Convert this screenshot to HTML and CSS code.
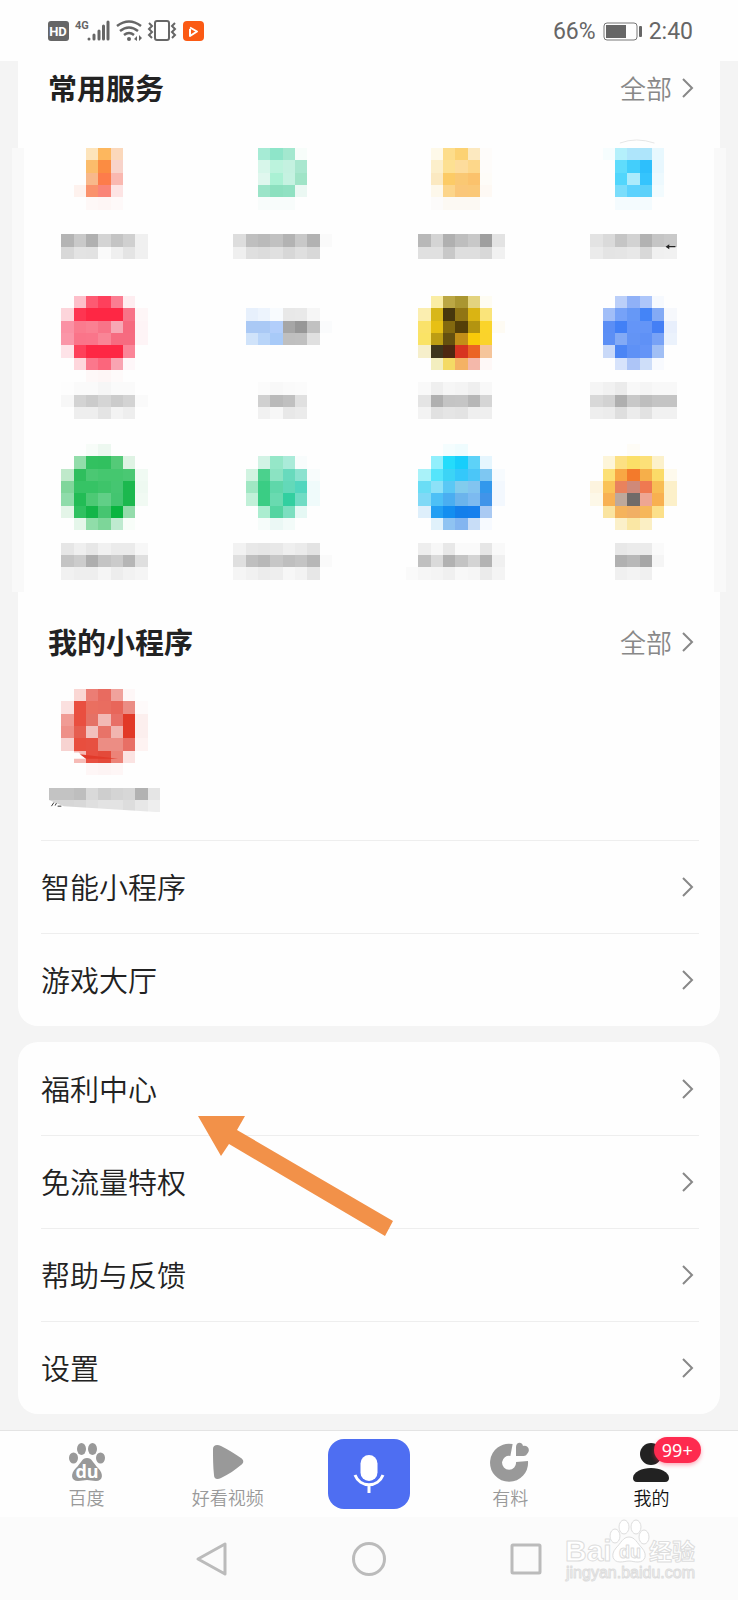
FILE: index.html
```html
<!DOCTYPE html>
<html lang="zh-CN">
  <head>
    <meta charset="UTF-8" />
    <meta name="viewport" content="width=device-width, initial-scale=1.0" />
    <title>我的</title>
    <link rel="stylesheet" href="styles.css" />
  </head>

  <body>
    <header class="status">
      <div class="status-left">
        <svg width="156" height="24" viewBox="0 0 156 24" fill="none" stroke="#666" stroke-width="2">
          <rect x="0" y="2" width="21" height="20" rx="3" fill="#666" stroke="none" />
          <text x="10" y="17" class="hd">HD</text>
          <text x="27" y="10" class="net">4G</text>
          <g stroke-width="3" stroke-linecap="round">
            <path d="M41 20v0M46 20v-4M51 20v-8M55.500 20V7M60 20V3" />
          </g>
          <path d="M69 7q12-9 24 0M72 12q9-7 18 0M76 16q5-4 10 0" stroke-width="2.500" />
          <circle cx="81" cy="20" r="2" fill="#666" stroke="none" />
          <path d="M86 20l3-3v5zM94 19l-3-3v6z" fill="#666" stroke="none" />
          <rect x="107" y="2" width="14" height="19" rx="2" />
          <path d="M101 4l3 3-3 3 3 3-3 3 3 3M127 4l-3 3 3 3-3 3 3 3-3 3" />
          <rect x="135" y="2" width="21" height="20" rx="4" fill="#fb5a14" stroke="none" />
          <path d="M142 10v7l7-4.500-7-4" stroke="#fff" stroke-linejoin="round" />
        </svg>
      </div>
      <div class="status-right">
        <span>66%</span>
        <svg width="39" height="19" viewBox="0 0 39 19" fill="none">
          <rect x="1" y="1" width="33" height="17" rx="3" stroke="#777" stroke-width="1" />
          <rect x="3" y="3" width="20" height="13" fill="#666" />
          <rect x="36" y="4" width="3" height="11" rx="1" fill="#666" />
        </svg>
        <span>2:40</span>
      </div>
    </header>

    <main class="content">
      <section class="card card-top">
        <div class="head">
          <h2>常用服务</h2>
          <a class="more" href="#"><span>全部</span><svg class="chevron" viewBox="0 0 12 20"><path d="M1 1l9 9-9 9" /></svg></a>
        </div>
        <div class="services" id="services"></div>

        <div class="head">
          <h2>我的小程序</h2>
          <a class="more" href="#"><span>全部</span><svg class="chevron" viewBox="0 0 12 20"><path d="M1 1l9 9-9 9" /></svg></a>
        </div>
        <div class="programs" id="programs"></div>

        <nav class="list">
          <a href="#"><span>智能小程序</span><svg class="chevron" viewBox="0 0 12 20"><path d="M1 1l9 9-9 9" /></svg></a>
          <a href="#"><span>游戏大厅</span><svg class="chevron" viewBox="0 0 12 20"><path d="M1 1l9 9-9 9" /></svg></a>
        </nav>
      </section>

      <section class="card">
        <nav class="list">
          <a href="#"><span>福利中心</span><svg class="chevron" viewBox="0 0 12 20"><path d="M1 1l9 9-9 9" /></svg></a>
          <a href="#"><span>免流量特权</span><svg class="chevron" viewBox="0 0 12 20"><path d="M1 1l9 9-9 9" /></svg></a>
          <a href="#"><span>帮助与反馈</span><svg class="chevron" viewBox="0 0 12 20"><path d="M1 1l9 9-9 9" /></svg></a>
          <a href="#"><span>设置</span><svg class="chevron" viewBox="0 0 12 20"><path d="M1 1l9 9-9 9" /></svg></a>
        </nav>
        <svg class="pointer" width="195" height="120" viewBox="0 0 195 120">
          <path d="M0 0h47l-8 14 156 91-8 15L31 28l-8 12z" fill="#f29149" />
        </svg>
      </section>
    </main>

    <footer>
      <nav class="tabs">
        <a href="#">
          <svg width="40" height="40" viewBox="0 0 40 40" fill="#999">
            <ellipse cx="14.500" cy="7" rx="4.500" ry="6" />
            <ellipse cx="25.500" cy="7" rx="4.500" ry="6" />
            <ellipse cx="6.500" cy="16" rx="4.500" ry="5.500" />
            <ellipse cx="33.500" cy="16" rx="4.500" ry="5.500" />
            <path d="M20 16c5 0 6 5 11 10 6 6 5 13-2 13-4 0-6-1-9-1s-5 1-9 1c-7 0-8-7-2-13 5-5 6-10 11-10z" />
            <text x="20" y="36" class="du">du</text>
          </svg>
          百度
        </a>
        <a href="#">
          <svg width="40" height="40" viewBox="0 0 40 40" fill="#999">
            <path d="M5 7c0-4 4-5 8-3 8 4 14 8 20 12 3 2 3 5 0 7-6 5-12 9-20 13-4 2-7 1-7-3-1-9-1-17-1-26z" />
          </svg>
          好看视频
        </a>
        <button type="button" class="voice" aria-label="语音">
          <svg width="32" height="38" viewBox="0 0 32 38" fill="none" stroke="#fff" stroke-width="3">
            <rect x="7.500" y="0" width="17" height="26" rx="8.500" fill="#fff" stroke="none" />
            <path d="M2 20c5 13 23 13 28 0M16 30v8" />
          </svg>
        </button>
        <a href="#">
          <svg width="40" height="40" viewBox="0 0 40 40" fill="none">
            <path d="M21.500 8A13 13 0 1 0 32 19.500" stroke="#999" stroke-width="12" />
            <path d="M26 14V5c0-5 6-6 7-1 5-1 8 4 4 8-1 2-3 2-5 2z" fill="#999" />
          </svg>
          有料
        </a>
        <a href="#" class="active">
          <svg width="40" height="40" viewBox="0 0 40 40" fill="#222">
            <circle cx="20" cy="12" r="11" />
            <path d="M2 36c0-6 9-10 18-10s18 4 18 10c0 2-1 4-4 4H6c-3 0-4-2-4-4z" />
          </svg>
          我的
          <span class="badge">99+</span>
        </a>
      </nav>

      <div class="sysnav">
        <button type="button" aria-label="返回">
          <svg width="34" height="36" viewBox="0 0 34 36"><path d="M30 3v30L3 18z" /></svg>
        </button>
        <button type="button" aria-label="主屏幕">
          <svg width="34" height="36" viewBox="0 0 34 36"><circle cx="17" cy="18" r="15.500" /></svg>
        </button>
        <button type="button" aria-label="最近任务">
          <svg width="34" height="36" viewBox="0 0 34 36"><rect x="3" y="4" width="28" height="28" rx="1" /></svg>
        </button>
        <svg class="watermark" width="140" height="66" viewBox="0 0 140 66">
          <text x="3" y="43" class="wm-name">Bai</text>
          <g class="wm-paw">
            <ellipse cx="53" cy="18" rx="5" ry="7" />
            <ellipse cx="62" cy="9" rx="5" ry="7" />
            <ellipse cx="74" cy="9" rx="5" ry="7" />
            <ellipse cx="82" cy="19" rx="5" ry="7" />
            <path d="M67 19c6 0 8 6 13 11 6 7 3 14-4 14-4 0-6-1-9-1s-5 1-9 1c-7 0-10-7-4-14 5-5 7-11 13-11z" />
          </g>
          <text x="57" y="40" class="wm-du">du</text>
          <text x="87" y="42" class="wm-cn">经验</text>
          <text x="4" y="60" class="wm-url">jingyan.baidu.com</text>
        </svg>
      </div>
    </footer>

    <script src="script.js"></script>
  </body>
</html>
```
FILE: styles.css
```css
* {
  box-sizing: border-box;
}

body {
  margin: 0;
  min-height: 100vh;
  display: flex;
  flex-direction: column;
  background-color: #f4f4f4;
  color: #222;
  font-family: "Noto Sans CJK SC", sans-serif;
}

a {
  color: inherit;
  text-decoration: none;
}

button {
  padding: 0;
  border: none;
  background: none;
}

svg {
  display: block;
  flex: none;
}

/* Status bar */
.status {
  display: flex;
  justify-content: space-between;
  align-items: center;
  height: 61px;
  padding: 1px 45px 0 48px;
  background-color: #fefefe;
}

.status-right {
  display: flex;
  align-items: center;
  gap: 7px;
  color: #666;
  font-family: Roboto, sans-serif;
  font-size: 23px;
}

.hd {
  fill: #fff;
  stroke: none;
  font: bold 13px Roboto, sans-serif;
  text-anchor: middle;
}

.net {
  fill: #666;
  stroke: none;
  font: bold 11px Roboto, sans-serif;
}

/* Cards */
.content {
  flex: 1;
  display: flex;
  flex-direction: column;
  gap: 16px;
  padding: 0 18px 16px;
}

.card {
  position: relative;
  border-radius: 20px;
  background-color: #fefefe;
}

.card-top {
  border-radius: 0 0 20px 20px;
}

.head {
  display: flex;
  justify-content: space-between;
  align-items: center;
  height: 54px;
  padding: 0 26px 0 30px;
}

h2 {
  margin: 0;
  padding-bottom: 2px;
  font-size: 29px;
  font-weight: 700;
}

.more {
  display: flex;
  align-items: center;
  gap: 10px;
  color: #888;
  font-size: 26px;
  font-weight: 350;
}

.more span,
.list span {
  padding-bottom: 2px;
}

.chevron {
  width: 12px;
  height: 20px;
  fill: none;
  stroke: #888;
  stroke-width: 2;
}

.services {
  display: grid;
  grid-template-columns: 14fr 15fr 14fr 9fr;
  margin: 33px -6px 23px;
  padding: 0 25px;
  border: solid #f9f9f9;
  border-width: 0 12px;
}

.programs {
  padding: 20px 31px 3px;
}

.mosaic {
  width: 111px;
  height: 148px;
  overflow: visible;
}

.list {
  padding: 0 21px 0 23px;
}

.list a {
  display: flex;
  justify-content: space-between;
  align-items: center;
  height: 93px;
  padding-right: 5px;
  font-size: 29px;
  font-weight: 350;
}

.list a + a,
.programs + .list a {
  border-top: 1px solid #eee;
}

.pointer {
  position: absolute;
  left: 180px;
  top: 74px;
}

/* Bottom tabs */
.tabs {
  display: grid;
  grid-template-columns: repeat(5, 1fr);
  height: 87px;
  padding: 0 16px;
  border-top: 1px solid #e4e4e4;
  background-color: #fefefe;
}

.tabs a {
  position: relative;
  display: flex;
  flex-direction: column;
  align-items: center;
  padding-top: 11px;
  color: #999;
  font-size: 18px;
  font-weight: 350;
  line-height: 31px;
}

.tabs .active {
  color: #111;
}

.du {
  fill: #fff;
  font: bold 18px "Open Sans", sans-serif;
  text-anchor: middle;
}

.voice {
  display: flex;
  align-items: center;
  justify-content: center;
  justify-self: center;
  width: 82px;
  height: 70px;
  margin-top: 8px;
  border-radius: 16px;
  background-color: #4e6ef2;
}

.badge {
  position: absolute;
  left: 73px;
  top: 6px;
  padding: 0 8px;
  border-radius: 13px;
  background-color: #fe2a4f;
  box-shadow: 0 2px 4px #fe2a4f66;
  color: #fff;
  font-family: "Noto Sans", sans-serif;
  font-size: 18px;
  font-weight: 400;
  line-height: 26px;
}

/* System keys */
.sysnav {
  position: relative;
  display: flex;
  justify-content: center;
  align-items: center;
  gap: 123px;
  height: 83px;
  background-color: #fbfbfb;
  fill: none;
  stroke: #bbb;
  stroke-width: 3;
  stroke-linejoin: round;
}

.watermark {
  position: absolute;
  right: 36px;
  top: 1px;
  fill: #fff;
  stroke: #ddd;
  stroke-width: 1;
}

.wm-name {
  font: bold 30px "Liberation Sans", sans-serif;
}

.wm-du {
  font: bold 18px "Liberation Sans", sans-serif;
}

.wm-cn {
  font: bold 23px "Noto Sans CJK SC", sans-serif;
}

.wm-url {
  font: 16px "Liberation Sans", sans-serif;
}
```
FILE: script.js
```js
// Every tile is a grid of 9 x 12 blocks: [first row, first column, colours]
const services = [
  {
    blocks: [
      [0, 3, 'fde4bb fdb75e fbd8bb'],
      [1, 3, 'fbbc6b fb8c42 f8d3ca'],
      [2, 3, 'f8b88b fd7c4b fab8b0'],
      [3, 2, 'fef2ee fa926c fa8578 fde4e4'],
      [4, 3, 'fef8f7 fef6f5 fef9f9'],
      [7, 1, 'b4b4b4 c9c9c9 b0b0b0 d4d4d4 c4c4c4 d0d0d0 f0f0f0'],
      [8, 1, 'd8d8d8 e3e3e3 e2e2e2 fafafa efefef e4e4e4 f0f0f0'],
    ],
  },
  {
    blocks: [
      [0, 3, 'a6ebd5 8ee5c9 a3e8cf f7fdfa'],
      [1, 3, 'd7f6ea bcf3dd c4f1e0 a9e7cf'],
      [2, 3, 'e0f7ee aaf1d4 c5f2e1 a0e4c7'],
      [3, 3, '9be4c8 8ce0bf 90e1c2 ebf8f3'],
      [4, 3, 'f8fcfb f8fcfb f8fcfb'],
      [7, 1, 'dddddd bfbfbf bababa c1c1c1 b3b3b3 c8c8c8 b2b2b2 fafafa'],
      [8, 1, 'efefef dfdfdf dcdcdc e0e0e0 d7d7d7 dfdfdf d8d8d8'],
    ],
  },
  {
    blocks: [
      [0, 2, 'fef9e9 fddd8b fcd273 fce9c0 fefcfa'],
      [1, 2, 'fcefcb fde092 fddc9c fdd78a fefcfa'],
      [2, 2, 'fbe9c1 fccb66 fac873 fbc26c fefcf8'],
      [3, 2, 'fdf8eb fcd58a fac779 fac877 fef9f4'],
      [4, 2, 'fcfbfa fcf9f3 fcf9f3 fcf9f3'],
      [7, 1, 'b8b8b8 d4d4d4 b0b0b0 bebebe c8c8c8 9f9f9f e3e3e3'],
      [8, 1, 'e0e0e0 e0e0e0 c8c8c8 dedede dedede d8d8d8 f1f1f1'],
    ],
  },
  {
    blocks: [
      [0, 2, 'f6fdfe b4f0fb aee5fb aee5fb e8f8fe'],
      [1, 3, '5fdcfc 43cefb 2dbffc e8f7fe'],
      [2, 3, '52d6fc acebfc 35c4fd edf9fe'],
      [3, 3, '7addfb 5cd2fd 5cd1fa f2fbfe'],
      [4, 3, 'f4fbfe f4fbfe f4fbfe'],
      [7, 1, 'e3e3e3 dadada c5c5c5 d2d2d2 b2b2b2 c5c5c5 c9c9c9'],
      [8, 1, 'ebebeb e4e4e4 e5e5e5 e8e8e8 d8d8d8 f0f0f0 f1f1f1'],
    ],
    extra:
      '<path d="M3.4-.4q1.300-.5 2.800 0" fill="none" stroke="#ddd" stroke-width=".06"/>' +
      '<path d="M7.100 8l.3-.2v.15h.5v.1h-.5v.15z" fill="#222"/>',
  },
  {
    blocks: [
      [0, 2, 'fdbfca fd5a72 fe405c fb7d91 feedf0'],
      [1, 1, 'fdd5db fe3551 fe2744 fe2744 fe2744 f87388 fef6f7'],
      [2, 1, 'fa91a4 fa7b8e fa8092 f87488 f7a8b5 f66a7f fef4f6'],
      [3, 1, 'fa96a8 fa7489 fa758a f98596 f66b80 f66b80 fef4f6'],
      [4, 1, 'fee3e8 fe405a fe2744 fe2744 fe2744 fb8598'],
      [5, 2, 'fed6dc fb778c fb667c f9a4b2 fef7f9'],
      [6, 3, 'fef8f8 fef6f6 fefafa'],
      [7, 1, 'fdfdfd fafafa fafafa f6f6f6 fafafa fafafa'],
      [8, 1, 'f7f7f7 d3d3d3 cbcbcb d5d5d5 cbcbcb d3d3d3 fafafa'],
      [9, 2, 'eeeeee eeeeee e4e4e4 f3f3f3 eeeeee'],
    ],
  },
  {
    blocks: [
      [1, 2, 'e7f0fc edf4fd f8fbfe e8e8e8 e9e9e9 f6f6f6'],
      [2, 2, 'aac9f5 aac9f5 b2cefb a6a6a6 979797 c1c1c1 fafbfc'],
      [3, 2, 'd0e3fa b9d5f9 a8caf8 bfbfbf c0c0c0 e0e0e0'],
      [7, 3, 'fbfbfb f8f8f8 fafafa fbfbfb'],
      [8, 3, 'd0d0d0 bababa c0c0c0 e0e0e0'],
      [9, 3, 'f1f1f1 f7f7f7 e8e8e8 ebebeb'],
    ],
  },
  {
    blocks: [
      [0, 2, 'faeda4 bba744 aa9631 e3d37e fefcf2'],
      [1, 1, 'fbeeb0 d8b719 47370d 917514 dab413 fae47a'],
      [2, 1, 'fae26a e7c014 83690f 543f08 b39410 fad42a fefbf3'],
      [3, 1, 'fae366 bd9d13 65500f c38f18 f9cb09 fad32b'],
      [4, 1, 'f6efcb 3e351c 4e2811 d73420 eb6424 f5c59b'],
      [5, 2, 'f3eebf f4da65 f4b264 f4b8aa fef8f7'],
      [7, 1, 'f9f9f9 efefef f6f6f6 f4f4f4 efefef f8f8f8'],
      [8, 1, 'e4e4e4 b0b0b0 c4c4c4 c5c5c5 b7b7b7 d5d5d5'],
      [9, 1, 'f3f3f3 e1e1e1 e5e5e5 e3e3e3 efefef efefef'],
    ],
  },
  {
    blocks: [
      [0, 3, 'bbcff9 90b1f7 adc6fa f6f9fe'],
      [1, 2, 'a1bef8 76a2f8 6698f6 4484f7 83aaf5 f6f8fc'],
      [2, 2, '5b8ef5 4280f6 6495f7 6495f7 447ff5 e8effc'],
      [3, 2, '5c8ff5 83aaf5 6394f5 5f91f6 78a2f6 ebf2fc'],
      [4, 2, 'c9d9f8 4b85f5 5e91f6 6494f7 a1bff5'],
      [5, 3, 'd7e3fb adc5f7 cedef9 f8fafe'],
      [7, 1, 'f5f5f5 f1f1f1 ebebeb f8f8f8 f5f5f5 f8f8f8 f8f8f8'],
      [8, 1, 'd8d8d8 d2d2d2 afafaf c8c8c8 bebebe c4c4c4 c4c4c4'],
      [9, 1, 'eeeeee ececec dedede ececec e2e2e2 f1f1f1 f1f1f1'],
    ],
  },
  {
    blocks: [
      [0, 3, 'f7fcf8 edf8f0'],
      [1, 2, '92ddaa 32c160 31c05f 54ca78 dff3e4'],
      [2, 1, 'bfe9ca 2fbe5d 4bc873 45c76f 45c76f 4ac873 f0faf3'],
      [3, 1, '80d69b 36c365 36c365 3ec46a 45c671 1cb84e eef9f1'],
      [4, 1, '8fdcaa 22bc55 4dc975 61cf87 43c570 1cb84e f1faf3'],
      [5, 1, 'e4f5e8 2fc160 13b548 46c570 08b53f 94dcab'],
      [6, 2, 'e5f6ea 90dda9 7dd699 bfead0 f8fdf9'],
      [8, 1, 'e6e6e6 efefef e7e7e7 f1f1f1 ebebeb ebebeb f7f7f7'],
      [9, 1, 'c4c4c4 cccccc aeaeae c4c4c4 cbcbcb b6b6b6 dfdfdf'],
      [10, 1, 'f1f1f1 eeeeee eeeeee f5f5f5 ededed f2f2f2 f5f5f5'],
    ],
  },
  {
    blocks: [
      [1, 3, 'd2f3e5 95e7c8 aaebd9 f8fcfc'],
      [2, 2, 'd1f3e1 4bd18d 8be3c2 68dabd 8be2cf f8fcfc'],
      [3, 2, 'a0e7c3 3acd84 5fd7aa 63d9b9 52d6be f0fbfb'],
      [4, 2, 'c1f0d8 3acd84 69dab0 32cfa0 70dcc4 f0fbfb'],
      [5, 3, 'abedd0 54d4a1 7cdfc0 e5f8f4'],
      [6, 3, 'f6fcfa ebf8f5 f3fbf9'],
      [8, 1, 'f2f2f2 e8e8e8 e6e6e6 e8e8e8 efefef ebebeb e3e3e3'],
      [9, 1, 'dfdfdf bfbfbf b8b8b8 c7c7c7 bfbfbf c4c4c4 b7b7b7 fafafa'],
      [10, 1, 'f5f5f5 f1f1f1 ececec eeeeee f7f7f7 f3f3f3 e7e7e7'],
    ],
  },
  {
    blocks: [
      [0, 3, 'f4fdfe effcfe'],
      [1, 2, '91effc 24dcfb 17cefb 5dd2f8 e6f6fe'],
      [2, 1, 'a9f2f9 55e5fb 3cd4f6 34c8fa 4bc6f8 7ec7f2 f7fbfe'],
      [3, 1, '6addf5 8de1f8 5ac8f5 82cced 82c4f0 3298ec f3f8fe'],
      [4, 1, '80d9f6 4dc0f6 4aaef1 6bb4ec 7cbaf0 4194e9 f3f8fe'],
      [5, 1, 'deeffb 229ff3 138ef0 137feb 157fed aacaf3'],
      [6, 2, 'e0f1fb 8fc3f2 83b5f0 c8ddf7 f7faff'],
      [8, 1, 'eeeeee f7f7f7 e8e8e8 fafafa fafafa e6e6e6 f9f9f9'],
      [9, 1, 'c0c0c0 dadada b2b2b2 c4c4c4 d4d4d4 b3b3b3 f0f0f0'],
      [10, 0, 'fafafa f6f6f6 f4f4f4 f0f0f0 f8f8f8 f6f6f6 ebebeb f4f4f4'],
    ],
  },
  {
    blocks: [
      [0, 4, 'fefcf6'],
      [1, 2, 'fdf5d9 fce083 fbdf67 fce078 fcf1cb'],
      [2, 2, 'fce076 f8a744 f37a2b f6af4a fbdb68 fefaed'],
      [3, 1, 'fdf4df fac358 e9825d cf8979 ef7951 f8bd54 fcf0c9'],
      [4, 1, 'fdf8e8 f8b153 bea99c 706b69 eea693 f8b050 fcf0c9'],
      [5, 2, 'fae4a0 f5b35c f1af64 f6b75b fce08a'],
      [6, 3, 'fbf0c9 fae7a4 fbefc4'],
      [8, 3, 'e8e8e8 ebebeb ebebeb fafafa'],
      [9, 3, 'b1b1b1 b8b8b8 a6a6a6 f5f5f5'],
      [10, 3, 'f0f0f0 f3f3f3 f0f0f0'],
    ],
  },
];

const programs = [
  {
    blocks: [
      [0, 2, 'fad7d4 ec7d74 e86b60 f0a29c fef7f7'],
      [1, 1, 'fbe0df e94f40 ea6f60 e96d60 e8665a eb8c84 fefafa'],
      [2, 1, 'f09b94 e94f40 e57165 f2b9b5 e86f66 e23927 fcefee'],
      [3, 1, 'ee9088 e65e50 f2c1be e87368 f1b5b0 e23927 fcefee'],
      [4, 1, 'f7d3d1 e84e3e e75041 ec8d84 ec8d84 e86f65 fef3f2'],
      [5, 2, 'f6bbb6 e84f40 e44a3a ec8378 fbe3e2'],
      [6, 3, 'fef6f6 fdf4f4 fef6f6'],
      [8, 0, 'c3c3c3 c3c3c3 bebebe d9d9d9 cecece d4d4d4 d7d7d7 b2b2b2 e5e5e5'],
      [9, 0, 'd6d6d6 d6d6d6 d8d8d8 dfdfdf e3e3e3 e3e3e3 dddddd e7e7e7 eeeeee'],
    ],
    extra:
      '<path d="M1.900 5.150h.5l.6.500H1.900z" fill="#fefefe"/>' +
      '<path d="M2.500 5.300l.5.350h2.600z" fill="#e23a2a"/>' +
      '<path d="M0 9v1.100h9v-.1L1.200 9.500z" fill="#fefefe"/>' +
      '<path d="M.2 9.500l.2-.3M.5 9.450l.1-.2M.7 9.500h.3" stroke="#333" stroke-width=".08"/>',
  },
];

const drawMosaic = ({ blocks, extra = '' }) => {
  let rects = '';
  blocks.forEach(([row, col, colors]) => {
    colors.split(' ').forEach((color, i) => {
      rects += `<rect x="${col + i}" y="${row}" width="1" height="1" fill="#${color}"/>`;
    });
  });
  return `<a href="#"><svg class="mosaic" viewBox="0 0 9 12"><g shape-rendering="crispEdges">${rects}</g>${extra}</svg></a>`;
};

document.getElementById('services').innerHTML = services.map(drawMosaic).join('');
document.getElementById('programs').innerHTML = programs.map(drawMosaic).join('');
```
